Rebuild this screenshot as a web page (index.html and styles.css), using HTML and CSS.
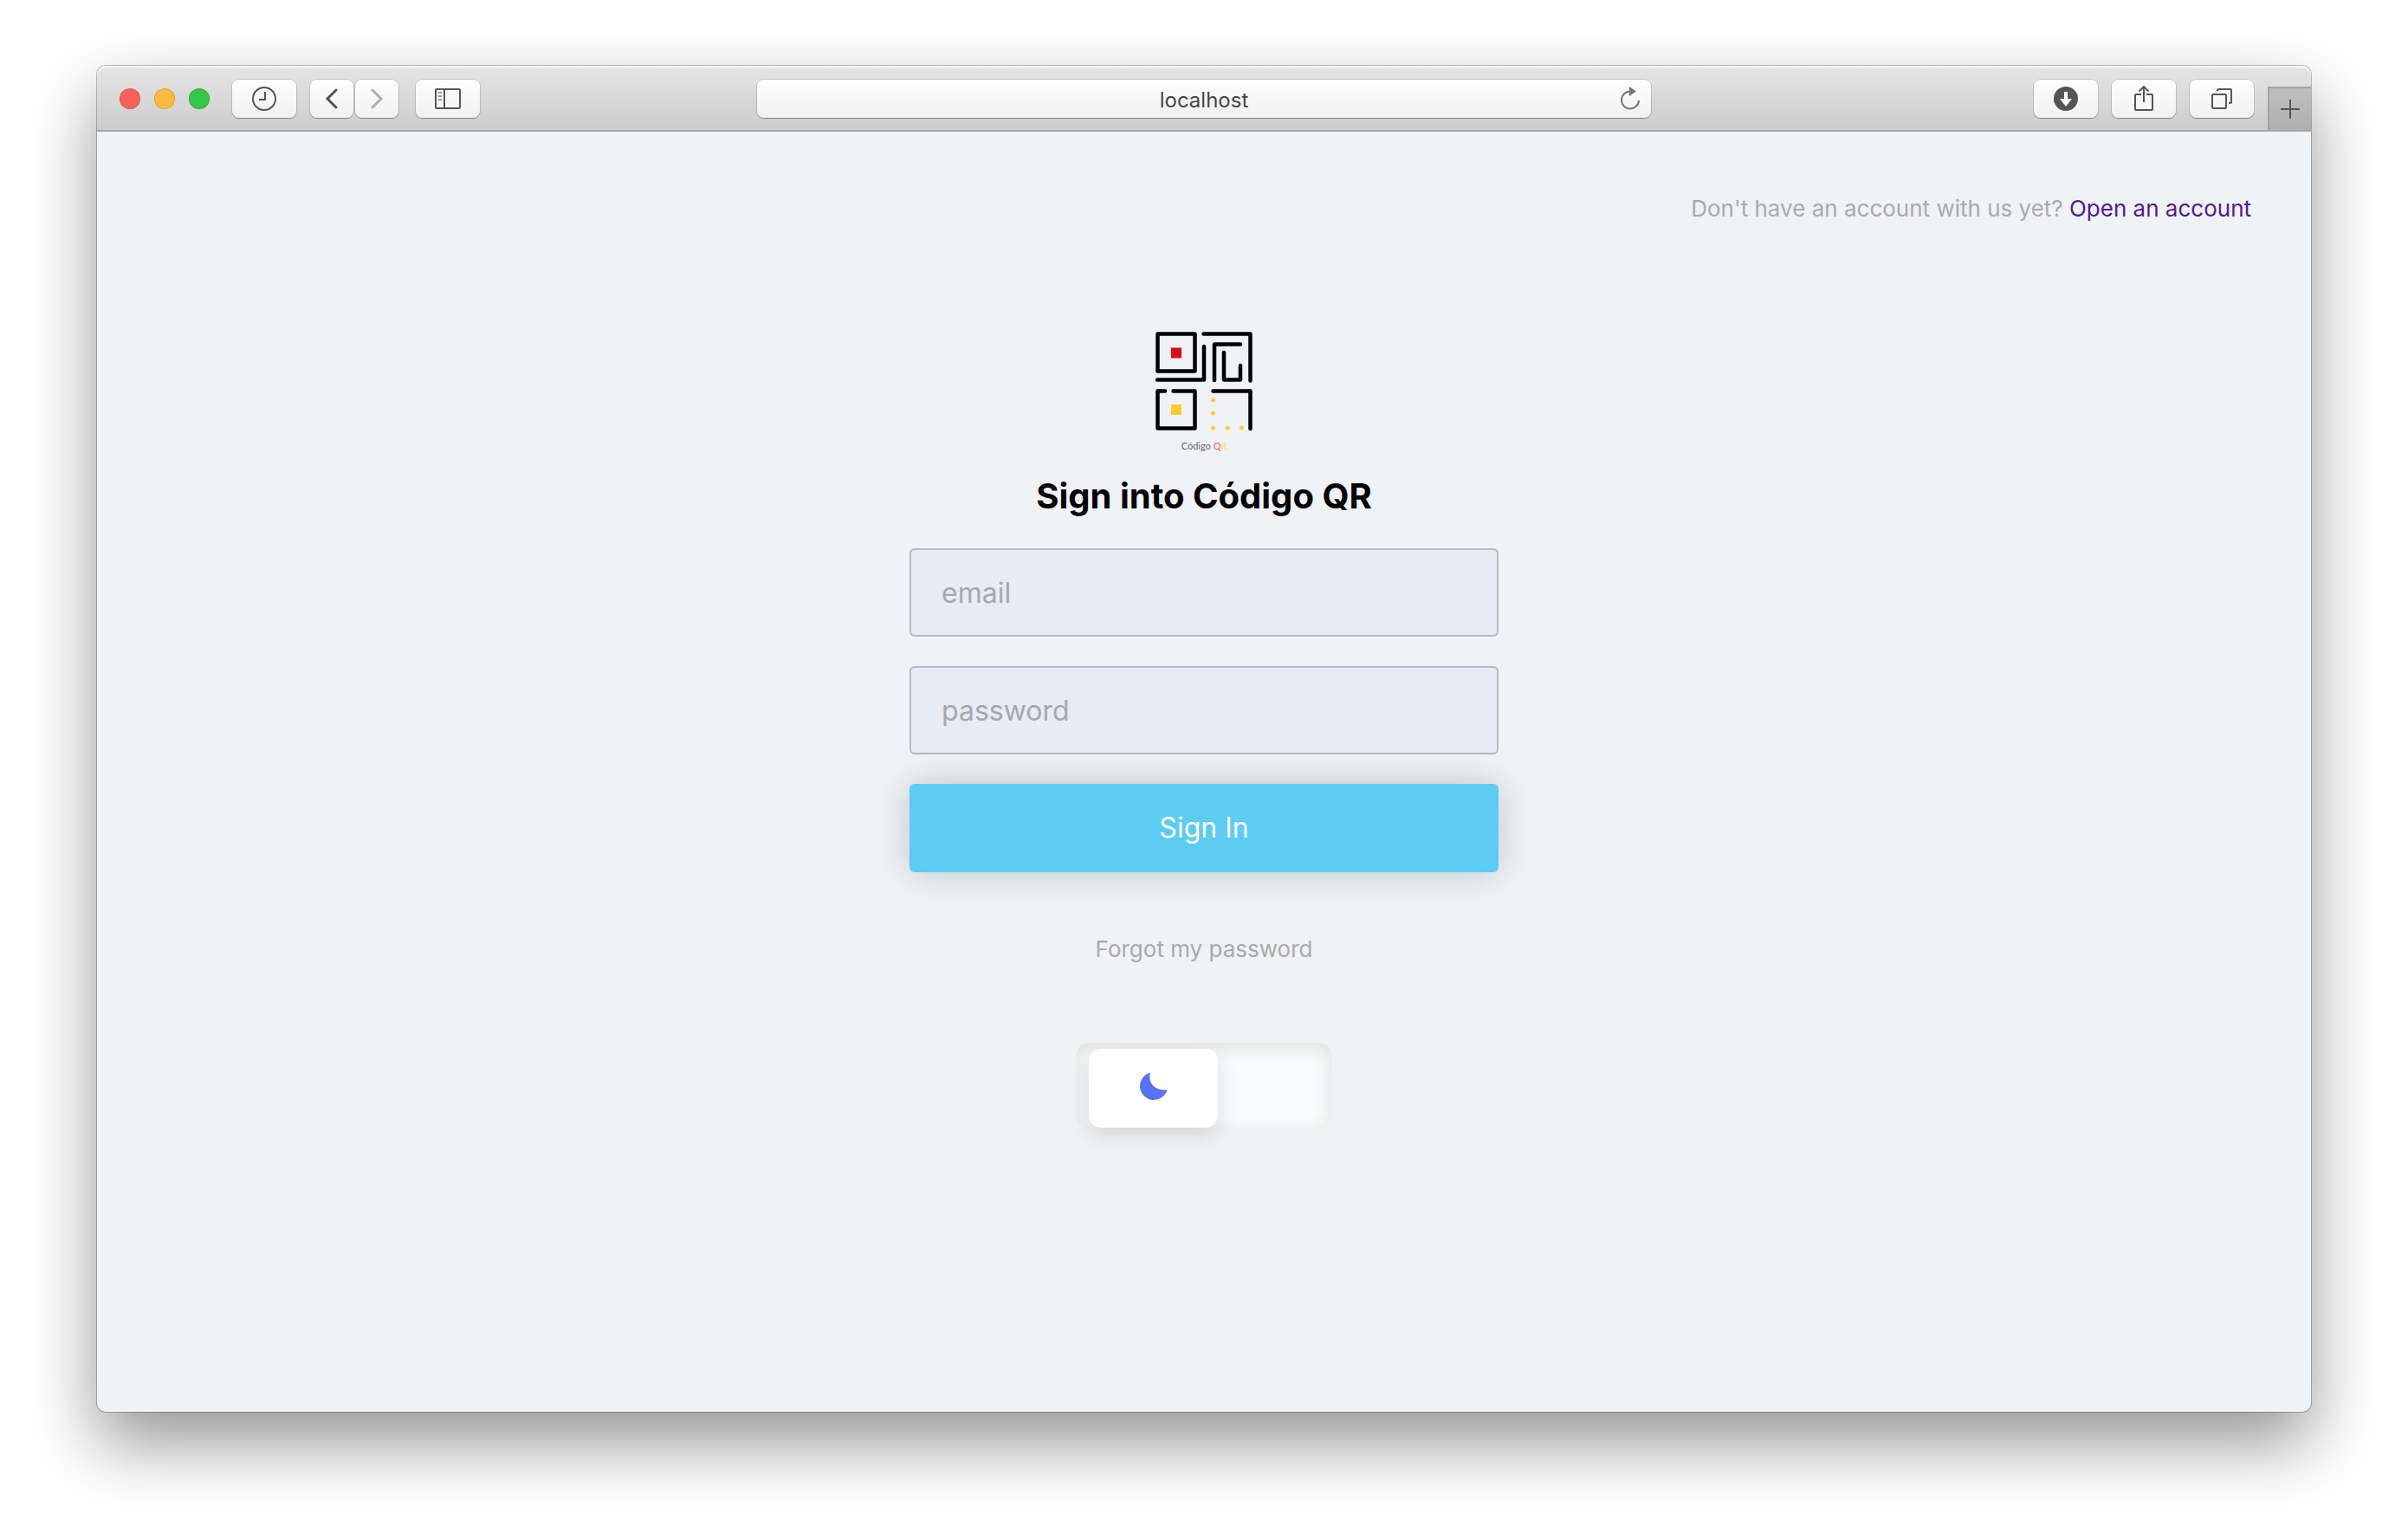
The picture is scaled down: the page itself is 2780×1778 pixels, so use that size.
FILE: index.html
```html
<!DOCTYPE html>
<html lang="en">
<head>
<meta charset="utf-8">
<meta name="viewport" content="width=device-width, initial-scale=1">
<title>Sign into Código QR</title>
<link rel="stylesheet" href="styles.css">
</head>
<body>
<div class="window">
  <header class="toolbar">
    <div class="toolbar-side">
      <div class="lights">
        <button class="light light-close" type="button" aria-label="Close"></button>
        <button class="light light-minimize" type="button" aria-label="Minimize"></button>
        <button class="light light-zoom" type="button" aria-label="Zoom"></button>
      </div>
      <button class="tool tool-history" type="button" aria-label="History">
        <svg width="30" height="30" viewBox="0 0 30 30"><circle cx="15" cy="15" r="13"/><path d="M16 7v9H9"/></svg>
      </button>
      <div class="tool-pair">
        <button class="tool tool-narrow" type="button" aria-label="Back">
          <svg class="arrow" width="30" height="30" viewBox="0 0 30 30"><path d="M20 5 10 15l10 10"/></svg>
        </button>
        <button class="tool tool-narrow" type="button" aria-label="Forward" disabled>
          <svg class="arrow arrow-off" width="30" height="30" viewBox="0 0 30 30"><path d="m10 5 10 10-10 10"/></svg>
        </button>
      </div>
      <button class="tool" type="button" aria-label="Sidebar">
        <svg width="30" height="30" viewBox="0 0 30 30"><rect x="1" y="4" width="28" height="22" rx="1"/><path d="M11 4v22"/><path class="faint" d="M4 8h4M4 12h4M4 16h4"/></svg>
      </button>
    </div>
    <div class="address">
      <input class="address-field" type="text" value="localhost" aria-label="Address">
      <button class="reload" type="button" aria-label="Reload">
        <svg width="26" height="28" viewBox="0 0 26 28"><path d="M23 16a10 10 0 1 1-10-10.500"/><path class="tip" d="M12 0v11l8-5.500z"/></svg>
      </button>
    </div>
    <div class="toolbar-side toolbar-end">
      <button class="tool" type="button" aria-label="Downloads">
        <svg width="30" height="30" viewBox="0 0 30 30"><circle class="disc" cx="15" cy="15" r="14"/><path class="cutout" d="M13 7h4v8h5l-7 9-7-9h5z"/></svg>
      </button>
      <button class="tool" type="button" aria-label="Share">
        <svg width="30" height="30" viewBox="0 0 30 30"><path d="M12 10H6a1 1 0 0 0-1 1v16a1 1 0 0 0 1 1h18a1 1 0 0 0 1-1V11a1 1 0 0 0-1-1h-6M15 19V1M9.500 6.500 15 1l5.500 5.500"/></svg>
      </button>
      <button class="tool" type="button" aria-label="Tabs">
        <svg width="30" height="30" viewBox="0 0 30 30"><rect x="4" y="10" width="16" height="16" rx="1"/><path d="M10 6V5a1 1 0 0 1 1-1h14a1 1 0 0 1 1 1v14a1 1 0 0 1-1 1h-2"/></svg>
      </button>
      <button class="new-tab" type="button" aria-label="New tab">
        <svg width="24" height="24" viewBox="0 0 24 24"><path d="M12 1v22M1 12h22"/></svg>
      </button>
    </div>
  </header>
  <main class="page">
    <p class="signup">Don't have an account with us yet? <a class="signup-link" href="#">Open an account</a></p>
    <form class="login">
      <svg class="logo" width="180" height="180" viewBox="0 0 180 180" role="img" aria-label="Código QR">
        <path class="maze" d="M36.500 25.500h43v43h-43zM89.500 25.500h54v54M90 40v38.500H36M102 79V37.500h30M113 47v31.500h19V62M45 91.500h-8.500v43h43v-43H54.500M100.500 91.500h43V135"/>
        <path class="red" d="M52 41.500h12v12H52z"/>
        <path class="yellow" d="M52 107h12v12H52z"/>
        <g class="yellow"><circle cx="100.500" cy="102" r="2.500"/><circle cx="100.500" cy="117" r="2.500"/><circle cx="100.500" cy="134" r="2.500"/><circle cx="117.500" cy="134" r="2.500"/><circle cx="133.500" cy="134" r="2.500"/></g>
        <text class="logo-name" x="90" y="159" text-anchor="middle">Código <tspan class="letter-q">Q</tspan><tspan class="letter-r">R</tspan></text>
      </svg>
      <h1 class="title">Sign into Código QR</h1>
      <input class="field" type="email" placeholder="email" aria-label="email">
      <input class="field" type="password" placeholder="password" aria-label="password">
      <button class="submit" type="submit">Sign In</button>
      <a class="forgot" href="#">Forgot my password</a>
      <label class="theme">
        <input class="theme-input" type="checkbox" aria-label="Light theme">
        <span class="thumb">
          <svg width="32" height="32" viewBox="0 0 32 32"><path d="M12 0.500C9 12 17 22 31.500 20A16 16 0 1 1 12 0.500z"/></svg>
        </span>
      </label>
    </form>
  </main>
</div>
</body>
</html>
```
FILE: styles.css
```css
* {
  box-sizing: border-box;
}

body {
  display: flex;
  min-height: 100vh;
  margin: 0;
  padding: 76px 112px 148px;
  background: #fff;
  font-family: Inter, "Liberation Sans", sans-serif;
}

button,
input {
  margin: 0;
  padding: 0;
  border: 0;
  font-family: inherit;
}

.window {
  display: flex;
  flex: 1;
  flex-direction: column;
  border-radius: 10px;
  background: #eff3f6;
  box-shadow: 0 0 0 1px rgba(0, 0, 0, 0.24), 0 36px 80px rgba(0, 0, 0, 0.42);
}

/* Browser toolbar */
.toolbar {
  display: grid;
  grid-template-columns: 1fr 1032px 1fr;
  height: 76px;
  border-bottom: 2px solid #a6a6a6;
  border-radius: 10px 10px 0 0;
  background: linear-gradient(#e6e6e6, #cccccc);
  box-shadow: inset 0 2px #f5f5f5;
}

.toolbar-side {
  display: flex;
  align-items: flex-start;
  padding: 16px 0 0 26px;
}

.toolbar-end {
  justify-content: flex-end;
  gap: 16px;
  padding: 16px 0 0;
}

.lights {
  display: flex;
  gap: 16px;
  padding: 10px 26px 0 0;
}

.light {
  width: 24px;
  height: 24px;
  border-radius: 50%;
  box-shadow: inset 0 0 0 1px rgba(0, 0, 0, 0.12);
}

.light-close {
  background: #fc605c;
}

.light-minimize {
  background: #fdbc40;
}

.light-zoom {
  background: #34c84a;
}

.tool {
  display: grid;
  place-items: center;
  width: 74px;
  height: 44px;
  border-radius: 8px;
  background: linear-gradient(#fdfdfd, #f2f2f2);
  box-shadow: 0 0 0 1px rgba(0, 0, 0, 0.1), 0 1px 1px rgba(0, 0, 0, 0.3);
}

.tool svg,
.new-tab svg {
  fill: none;
  stroke: #555;
  stroke-width: 2;
}

.tool-pair {
  display: flex;
  gap: 2px;
  padding: 0 20px 0 16px;
}

.tool-narrow {
  width: 50px;
}

.tool .arrow {
  stroke-width: 3;
  stroke-linecap: round;
}

.tool .arrow-off {
  stroke: #b0b0b0;
}

.tool .faint {
  stroke: #999;
}

.tool .disc {
  fill: #555;
  stroke: none;
}

.tool .cutout {
  fill: #fff;
  stroke: none;
}

.new-tab {
  display: grid;
  place-items: center;
  align-self: flex-end;
  width: 50px;
  height: 50px;
  border: solid #a3a3a3;
  border-width: 2px 0 0 2px;
  background: linear-gradient(#bebebe, #b0b0b0);
}

.address {
  display: grid;
  grid-template-columns: 48px 1fr 48px;
  height: 44px;
  margin-top: 16px;
  border-radius: 8px;
  background: linear-gradient(#fdfdfd, #f2f2f2);
  box-shadow: 0 0 0 1px rgba(0, 0, 0, 0.1), 0 1px 1px rgba(0, 0, 0, 0.3);
}

.address-field {
  grid-column: 2;
  min-width: 0;
  padding-top: 2px;
  background: none;
  color: #444;
  font-size: 24px;
  text-align: center;
}

.reload {
  display: grid;
  place-items: center;
  background: none;
}

.reload svg {
  fill: none;
  stroke: #777;
  stroke-width: 2;
}

.reload .tip {
  fill: #777;
  stroke: none;
}

/* Sign-in page */
.page {
  display: flex;
  flex: 1;
  flex-direction: column;
}

.signup {
  margin: 0;
  padding: 72px 69px 0;
  color: #aaa;
  font-size: 26px;
  line-height: 34px;
  text-align: right;
}

.signup-link {
  color: #551a8b;
  text-decoration: none;
}

.login {
  display: flex;
  flex-direction: column;
  align-items: center;
  align-self: center;
  width: 680px;
  max-width: 100%;
  padding-top: 102px;
}

.logo {
  display: block;
}

.maze {
  fill: none;
  stroke: #000;
  stroke-width: 4.500;
  stroke-linecap: round;
  stroke-linejoin: round;
}

.red {
  fill: #d90d17;
}

.yellow {
  fill: #ffcb2f;
}

.logo-name {
  fill: #666;
  font-family: Lato, sans-serif;
  font-size: 11px;
}

.letter-q {
  fill: #f0596a;
}

.letter-r {
  fill: #fcd975;
}

.title {
  margin: 8px 0 35px;
  color: #000;
  font-size: 40px;
  font-weight: 700;
  line-height: 50px;
  white-space: nowrap;
}

.field {
  width: 100%;
  height: 102px;
  margin-bottom: 34px;
  padding: 0 35px;
  border: 2px solid #b7bac2;
  border-radius: 6px;
  background: #e7ebf4;
  color: #333;
  font-size: 32px;
}

.field::placeholder {
  color: #a5a8ad;
  opacity: 1;
}

.submit {
  width: 100%;
  height: 102px;
  padding-bottom: 2px;
  border-radius: 6px;
  background: #5dccf2;
  box-shadow: 0 0 40px rgba(0, 0, 0, 0.2);
  color: #fff;
  font-size: 32px;
}

.forgot {
  margin: 72px 0 91px;
  color: #aaa;
  font-size: 26px;
  line-height: 34px;
  text-decoration: none;
}

.theme {
  display: flex;
  width: 294px;
  height: 98px;
  padding: 7px 14px 0;
  border-radius: 14px;
  background: #f8fcfc;
  box-shadow: inset 0 6px 20px #dfe1df;
}

.theme-input {
  width: 0;
  height: 0;
  opacity: 0;
}

.thumb {
  display: grid;
  place-items: center;
  width: 149px;
  height: 91px;
  padding-bottom: 6px;
  border-radius: 14px;
  background: #fff;
  box-shadow: 0 8px 24px rgba(0, 0, 0, 0.13);
}

.thumb svg {
  fill: #5872f9;
}
```
